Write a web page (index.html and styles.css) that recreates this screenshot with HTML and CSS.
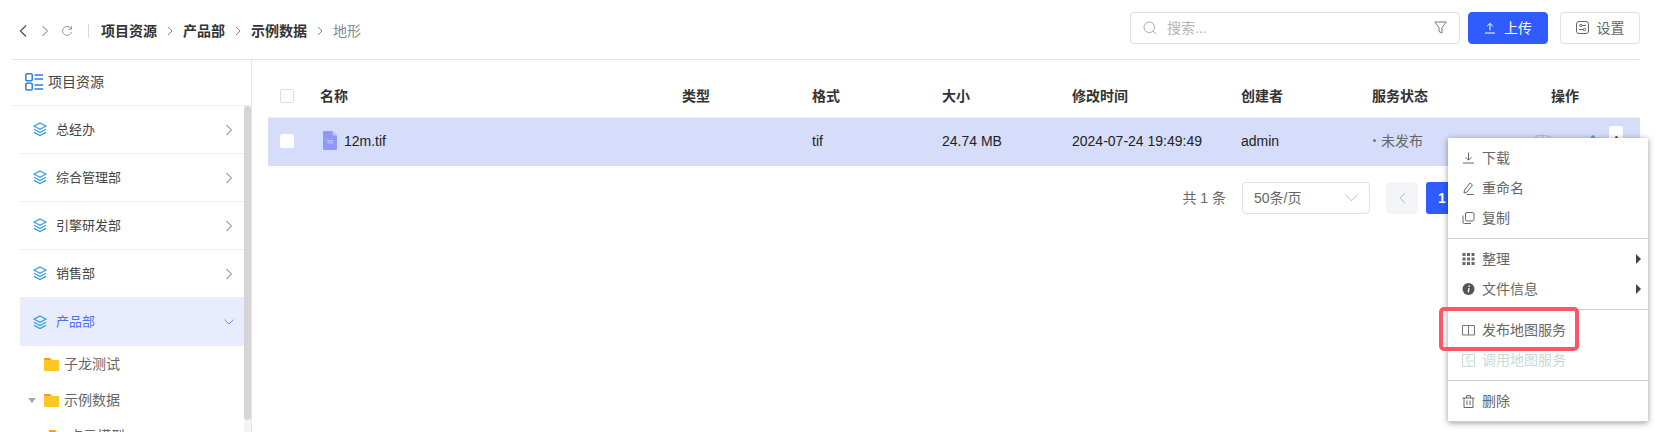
FILE: index.html
```html
<!DOCTYPE html>
<html lang="en">
<head>
  <meta charset="UTF-8" />
  <title>项目资源</title>
  <link rel="stylesheet" href="styles.css">
</head>
<body>
  <svg class="defs" width="0" height="0">
    <symbol id="i-layers" viewBox="0 0 14 15">
      <path d="M7 1 13 4.200 7 7.400 1 4.200Z" fill="none" stroke="currentColor" stroke-width="1.200"/>
      <path d="M1 7.300 7 10.500 13 7.300M1 10.400 7 13.600 13 10.400" fill="none" stroke="currentColor" stroke-width="1.200"/>
    </symbol>
    <symbol id="i-right" viewBox="0 0 6 12">
      <path d="M.6 1 5.400 6 .6 11" fill="none" stroke="currentColor"/>
    </symbol>
    <symbol id="i-folder" viewBox="0 0 15 13">
      <path d="M1 0H6L7.600 2H14A1 1 0 0 1 15 3V12A1 1 0 0 1 14 13H1A1 1 0 0 1 0 12V1A1 1 0 0 1 1 0Z" fill="#ffc726"/>
      <path d="M1 0H6L7.600 2H0V1A1 1 0 0 1 1 0Z" fill="#fd9b12"/>
    </symbol>
  </svg>

  <div class="page">
    <header class="topbar">
      <div class="nav-btns">
        <svg width="16" height="16" viewBox="0 0 16 16"><path d="M11 2.500 5.500 8 11 13.500" fill="none" stroke="#555" stroke-width="1.300"/></svg>
        <svg width="16" height="16" viewBox="0 0 16 16"><path d="M5.500 3 10.500 8 5.500 13" fill="none" stroke="#aaa" stroke-width="1.200"/></svg>
        <svg width="16" height="16" viewBox="0 0 16 16"><path d="M12.200 6A4.500 4.500 0 1 0 12.500 9M12.500 3.200V6.200H9.500" fill="none" stroke="#999"/></svg>
      </div>
      <span class="vline"></span>
      <nav class="crumbs">
        <b>项目资源</b><span class="sep"><svg width="6" height="10"><use href="#i-right"/></svg></span>
        <b>产品部</b><span class="sep"><svg width="6" height="10"><use href="#i-right"/></svg></span>
        <b>示例数据</b><span class="sep"><svg width="6" height="10"><use href="#i-right"/></svg></span>
        <span class="crumb-now">地形</span>
      </nav>
      <div class="tools">
        <div class="search">
          <svg width="14" height="14" viewBox="0 0 14 14"><circle cx="6.300" cy="6.300" r="5.300" fill="none" stroke="#aaa"/><path d="M10.200 10.200 13 13" stroke="#aaa"/></svg>
          <span class="placeholder">搜索...</span>
          <svg width="13" height="13" viewBox="0 0 13 13"><path d="M.8 1H12.200L8 6.500V12L5 10.500V6.500Z" fill="none" stroke="#777"/></svg>
        </div>
        <button class="btn btn-primary">
          <svg width="12" height="12" viewBox="0 0 12 12"><path d="M6 8.500V1.500M3 4.300 6 1.300 9 4.300M1 11H11" fill="none" stroke="#fff"/></svg>
          上传
        </button>
        <button class="btn">
          <svg width="13" height="13" viewBox="0 0 13 13"><rect x=".5" y=".5" width="12" height="12" rx="2.500" fill="none" stroke="#666"/><path d="M3 4.500H10M3 8.500H10" stroke="#666"/><circle cx="5" cy="4.500" r="1.200" fill="#fff" stroke="#666"/><circle cx="8.500" cy="8.500" r="1.200" fill="#fff" stroke="#666"/></svg>
          设置
        </button>
      </div>
    </header>

    <div class="main">
      <aside class="sidebar">
        <div class="side-title">
          <svg width="18" height="18" viewBox="0 0 18 18">
            <g fill="none" stroke="#2f7de8" stroke-width="1.500"><rect x=".8" y=".8" width="6.400" height="6.900" rx="1"/><rect x=".8" y="10.200" width="6.400" height="6.900" rx="1"/><path d="M9.500 2H18M9.500 6H18M9.500 12H18M9.500 16H18"/></g>
          </svg>
          项目资源
        </div>
        <div class="side-body">
          <div class="side-list">
            <div class="dept"><svg class="ic-layers" width="14" height="15"><use href="#i-layers"/></svg><span class="dept-name">总经办</span><svg class="ic-arrow" width="6" height="12"><use href="#i-right"/></svg></div>
            <div class="dept"><svg class="ic-layers" width="14" height="15"><use href="#i-layers"/></svg><span class="dept-name">综合管理部</span><svg class="ic-arrow" width="6" height="12"><use href="#i-right"/></svg></div>
            <div class="dept"><svg class="ic-layers" width="14" height="15"><use href="#i-layers"/></svg><span class="dept-name">引擎研发部</span><svg class="ic-arrow" width="6" height="12"><use href="#i-right"/></svg></div>
            <div class="dept"><svg class="ic-layers" width="14" height="15"><use href="#i-layers"/></svg><span class="dept-name">销售部</span><svg class="ic-arrow" width="6" height="12"><use href="#i-right"/></svg></div>
            <div class="dept dept-active"><svg class="ic-layers" width="14" height="15"><use href="#i-layers"/></svg><span class="dept-name">产品部</span><svg class="ic-down" width="10" height="6" viewBox="0 0 10 6"><path d="M.5.700 5 5 9.500.700" fill="none" stroke="currentColor"/></svg></div>
            <div class="tree-item"><svg width="15" height="13"><use href="#i-folder"/></svg>子龙测试</div>
            <div class="tree-item tree-open"><span class="caret"></span><svg width="15" height="13"><use href="#i-folder"/></svg>示例数据</div>
            <div class="tree-item tree-sub"><svg width="15" height="13"><use href="#i-folder"/></svg>点云模型</div>
          </div>
          <div class="scroll-track"><div class="scroll-thumb"></div></div>
        </div>
      </aside>

      <section class="content">
        <div class="grid-row grid-head">
          <span class="check"></span>
          <span>名称</span><span>类型</span><span>格式</span><span>大小</span><span>修改时间</span><span>创建者</span><span>服务状态</span><span>操作</span>
        </div>
        <div class="grid-row grid-file">
          <span class="check"></span>
          <span class="file-name">
            <svg width="14" height="19" viewBox="0 0 14 19">
              <path d="M0 1A1 1 0 0 1 1 0H9.500L14 4.500V18A1 1 0 0 1 13 19H1A1 1 0 0 1 0 18Z" fill="#9098fb"/>
              <path d="M9.500 0 14 4.500H10.500A1 1 0 0 1 9.500 3.500Z" fill="#c1c5fd"/>
              <text x="7" y="13" class="file-tag">TIF</text>
            </svg>
            12m.tif
          </span>
          <span></span>
          <span>tif</span>
          <span>24.74 MB</span>
          <span>2024-07-24 19:49:49</span>
          <span>admin</span>
          <span class="status"><i></i>未发布</span>
          <span class="ops">
            <svg width="17" height="14" viewBox="0 0 17 14"><path d="M1 2 8 1 16 3V14M1 2V14M8 1V14" fill="none" stroke="#b4bad0"/></svg>
            <span class="op-dot"></span>
            <svg class="op-up" width="10" height="14" viewBox="0 0 10 14"><path d="M1 6 5 1.500 9 6M5 2V14" fill="none" stroke="#4a6af0"/></svg>
            <span class="op-more"><i></i></span>
          </span>
        </div>
        <div class="pager">
          <span class="total">共 1 条</span>
          <div class="size-select">50条/页<svg width="13" height="8" viewBox="0 0 13 8"><path d="M.7.800 6.500 6.800 12.300.800" fill="none" stroke="#bbb"/></svg></div>
          <button class="pg pg-off"><svg width="7" height="12"><use href="#i-right" transform="matrix(-1 0 0 1 7 0)"/></svg></button>
          <button class="pg pg-on">1</button>
          <button class="pg pg-off"><svg width="7" height="12"><use href="#i-right"/></svg></button>
        </div>
      </section>
    </div>
  </div>

  <div class="menu">
    <div class="menu-group">
      <div class="menu-item">
        <svg width="12" height="12" viewBox="0 0 12 12"><path d="M6 .5V8M3 5.200 6 8.200 9 5.200M.5 11H11.500" fill="none" stroke="#666"/></svg>下载
      </div>
      <div class="menu-item">
        <svg width="12" height="13" viewBox="0 0 12 13"><path d="M2 8 7.500 1 10 3 4.500 10 1.500 11ZM4 12.500H11.500" fill="none" stroke="#666"/></svg>重命名
      </div>
      <div class="menu-item">
        <svg width="12" height="12" viewBox="0 0 12 12"><rect x="3" y=".5" width="8.500" height="8.500" rx="1.500" fill="none" stroke="#666"/><path d="M.5 3.500V10A1.500 1.500 0 0 0 2 11.500H8.500" fill="none" stroke="#666"/></svg>复制
      </div>
    </div>
    <div class="menu-group">
      <div class="menu-item">
        <svg width="12" height="12" viewBox="0 0 12 12"><path d="M0 0H3V3H0ZM4.500 0H7.500V3H4.500ZM9 0H12V3H9ZM0 4.500H3V7.500H0ZM4.500 4.500H7.500V7.500H4.500ZM9 4.500H12V7.500H9ZM0 9H3V12H0ZM4.500 9H7.500V12H4.500ZM9 9H12V12H9Z" fill="#666"/></svg>整理<span class="submenu-arrow"></span>
      </div>
      <div class="menu-item">
        <svg width="12" height="12" viewBox="0 0 12 12"><circle cx="6" cy="6" r="6" fill="#555"/><path d="M6.700 2.600V3.900M6.500 5.200 5.700 9.300" stroke="#fff" stroke-width="1.400" fill="none"/></svg>文件信息<span class="submenu-arrow"></span>
      </div>
    </div>
    <div class="menu-group">
      <div class="menu-item">
        <svg width="13" height="12" viewBox="0 0 13 12"><path d="M.5 1.500H12.500V11H.5ZM6.500 1.500V11" fill="none" stroke="#777"/></svg>发布地图服务
      </div>
      <div class="menu-item menu-off">
        <svg width="13" height="13" viewBox="0 0 13 13"><path d="M.5.500H12.500V12.500H.5ZM8 .5 4.500 6 8 12.500M4 3.500H7M6 7H12" fill="none" stroke="#c5dbd8"/></svg>调用地图服务
      </div>
    </div>
    <div class="menu-group">
      <div class="menu-item">
        <svg width="12" height="13" viewBox="0 0 12 13"><path d="M0 3H12M4 3V.7H8V3M1.500 3V12.500H10.500V3M4.500 5.500V10M7.500 5.500V10" fill="none" stroke="#666"/></svg>删除
      </div>
    </div>
    <div class="callout"></div>
  </div>
</body>
</html>
```

FILE: styles.css
```css
* {
  box-sizing: border-box;
}

body {
  margin: 0;
  height: 432px;
  overflow: hidden;
  background: #fff;
  color: #333;
  font-family: "Liberation Sans", "Noto Sans CJK SC", sans-serif;
  font-size: 14px;
  line-height: 20px;
}

.defs {
  position: absolute;
}

svg {
  flex: none;
  display: block;
}

.page {
  width: 1628px;
  margin-left: 12px;
}

/* top bar */
.topbar {
  display: flex;
  align-items: center;
  height: 60px;
  border-bottom: 1px solid #e4e5ea;
  padding: 3px 0 0 3px;
}

.nav-btns {
  display: flex;
  gap: 6px;
}

.vline {
  width: 1px;
  height: 14px;
  background: #d8d8dc;
  margin: 0 12px 0 13px;
}

.crumbs {
  display: flex;
  align-items: center;
  flex: 1;
}

.crumbs b {
  font-weight: 700;
  color: #333;
}

.sep {
  width: 26px;
  display: flex;
  justify-content: center;
  color: #666;
}

.crumb-now {
  color: #888;
}

.tools {
  display: flex;
  gap: 12px;
  margin-top: -7px;
}

.search {
  display: flex;
  align-items: center;
  width: 330px;
  height: 32px;
  margin-right: -4px;
  padding: 0 12px;
  border: 1px solid #e0e0e8;
  border-radius: 4px;
}

.placeholder {
  flex: 1;
  margin-left: 10px;
  color: #b4b4b4;
}

.btn {
  display: flex;
  align-items: center;
  justify-content: center;
  gap: 8px;
  width: 80px;
  height: 32px;
  padding: 0;
  border: 1px solid #e0e0e8;
  border-radius: 4px;
  background: #fff;
  color: #666;
  font: inherit;
}

.btn-primary {
  background: #2f5bff;
  border-color: #2f5bff;
  color: #fff;
}

/* sidebar */
.main {
  display: flex;
}

.sidebar {
  width: 240px;
  height: 372px;
  border-right: 1px solid #e4e5ea;
}

.side-title {
  display: flex;
  align-items: center;
  gap: 5px;
  height: 46px;
  padding: 0 0 2px 13px;
  border-bottom: 1px solid #eeeef1;
  color: #444;
}

.side-body {
  display: flex;
  height: 326px;
  padding-left: 8px;
}

.side-list {
  width: 224px;
  overflow: hidden;
}

.dept {
  display: flex;
  align-items: center;
  height: 48px;
  padding: 0 12px 0 13px;
  border-bottom: 1px solid #eeeef1;
  color: #444;
  font-size: 13px;
}

.dept-name {
  flex: 1;
  margin-left: 9px;
}

.ic-layers {
  color: #2f9fe8;
}

.ic-arrow {
  color: #666;
}

.dept-active {
  background: #e8ecfd;
  border-bottom: 0;
  color: #4f6ef7;
}

.ic-down {
  margin-right: -2px;
  color: #6f88f5;
}

.tree-item {
  display: flex;
  align-items: center;
  gap: 5px;
  height: 36px;
  padding-left: 24px;
  color: #666;
}

.tree-open {
  padding-left: 8px;
}

.caret {
  width: 0;
  height: 0;
  margin-right: 3px;
  border: 4px solid transparent;
  border-top: 5px solid #aaa;
  border-bottom: 0;
}

.tree-sub {
  padding-left: 29px;
}

.scroll-track {
  width: 7px;
  background: #f4f4f6;
}

.scroll-thumb {
  height: 314px;
  border-radius: 4px;
  background: #d5d5d8;
}

/* table */
.content {
  flex: 1;
  padding: 16px 0 0 16px;
}

.grid-row {
  display: grid;
  grid-template-columns: 52px 362px 130px 130px 130px 169px 131px 179px 1fr;
  align-items: center;
}

.grid-head {
  height: 42px;
  padding-bottom: 2px;
  border-bottom: 1px solid #eeeef1;
  font-weight: 700;
  color: #333;
}

.grid-file {
  height: 48px;
  padding-bottom: 3px;
  background: #d5ddfb;
  color: #222;
}

.check {
  width: 14px;
  height: 14px;
  margin-left: 12px;
  border: 1px solid #dddde3;
  border-radius: 2px;
  background: #fff;
}

.grid-file .check {
  border-color: #fff;
}

.file-name {
  display: flex;
  align-items: center;
  gap: 7px;
  padding-left: 3px;
}

.file-tag {
  fill: #dfe2ff;
  font-size: 4.500px;
  text-anchor: middle;
}

.status {
  display: flex;
  align-items: center;
  color: #666;
}

.status i {
  width: 3px;
  height: 3px;
  margin: 0 5px 0 1px;
  border-radius: 50%;
  background: #777;
}

.ops {
  display: flex;
  justify-content: flex-end;
  align-items: flex-start;
  gap: 11px;
  min-width: 0;
  height: 48px;
  margin-bottom: -3px;
  padding: 8px 17px 0 0;
}

.ops svg {
  margin-top: 8px;
}

.op-dot {
  flex: none;
  width: 3px;
  height: 3px;
  margin: 16px 8px 0 3px;
  border-radius: 50%;
  background: #4a6af0;
}

.op-more {
  flex: none;
  display: flex;
  justify-content: center;
  width: 14px;
  height: 32px;
  border-radius: 3px;
  background: #fff;
}

.op-more i {
  width: 3px;
  height: 3px;
  margin-top: 10px;
  border-radius: 50%;
  background: #555;
}

.pager {
  display: flex;
  align-items: center;
  justify-content: flex-end;
  gap: 8px;
  margin-top: 16px;
  padding-right: 142px;
  color: #666;
}

.total {
  margin-right: 8px;
}

.size-select {
  display: flex;
  align-items: center;
  justify-content: space-between;
  width: 128px;
  height: 32px;
  margin-right: 8px;
  padding: 0 11px 0 11px;
  border: 1px solid #e0e0e8;
  border-radius: 4px;
}

.pg {
  display: flex;
  align-items: center;
  justify-content: center;
  width: 32px;
  height: 32px;
  padding: 0;
  border: 0;
  border-radius: 3px;
  font: inherit;
}

.pg-off {
  background: #f4f5f9;
  color: #bbb;
}

.pg-on {
  background: #2f5bff;
  color: #fff;
  font-weight: 700;
}

/* context menu over the row */
.menu {
  position: absolute;
  left: 1448px;
  top: 138px;
  width: 200px;
  background: #fff;
  box-shadow: 0 1px 6px rgba(0, 0, 0, 0.4);
  color: #666;
}

.menu-group {
  padding: 5px 0;
  border-bottom: 1px solid #ccc;
}

.menu-group:last-of-type {
  border-bottom: 0;
}

.menu-item {
  display: flex;
  align-items: center;
  gap: 7px;
  height: 30px;
  padding-left: 14px;
}

.menu-item svg {
  width: 13px;
}

.menu-off {
  color: #c5dbd8;
}

.submenu-arrow {
  margin-left: auto;
  margin-right: 7px;
  border: 5px solid transparent;
  border-left: 5px solid #444;
  border-right: 0;
}

.callout {
  position: absolute;
  left: -9px;
  top: 169px;
  width: 140px;
  height: 44px;
  border: 4px solid #ff5468;
  border-radius: 5px;
}
```
